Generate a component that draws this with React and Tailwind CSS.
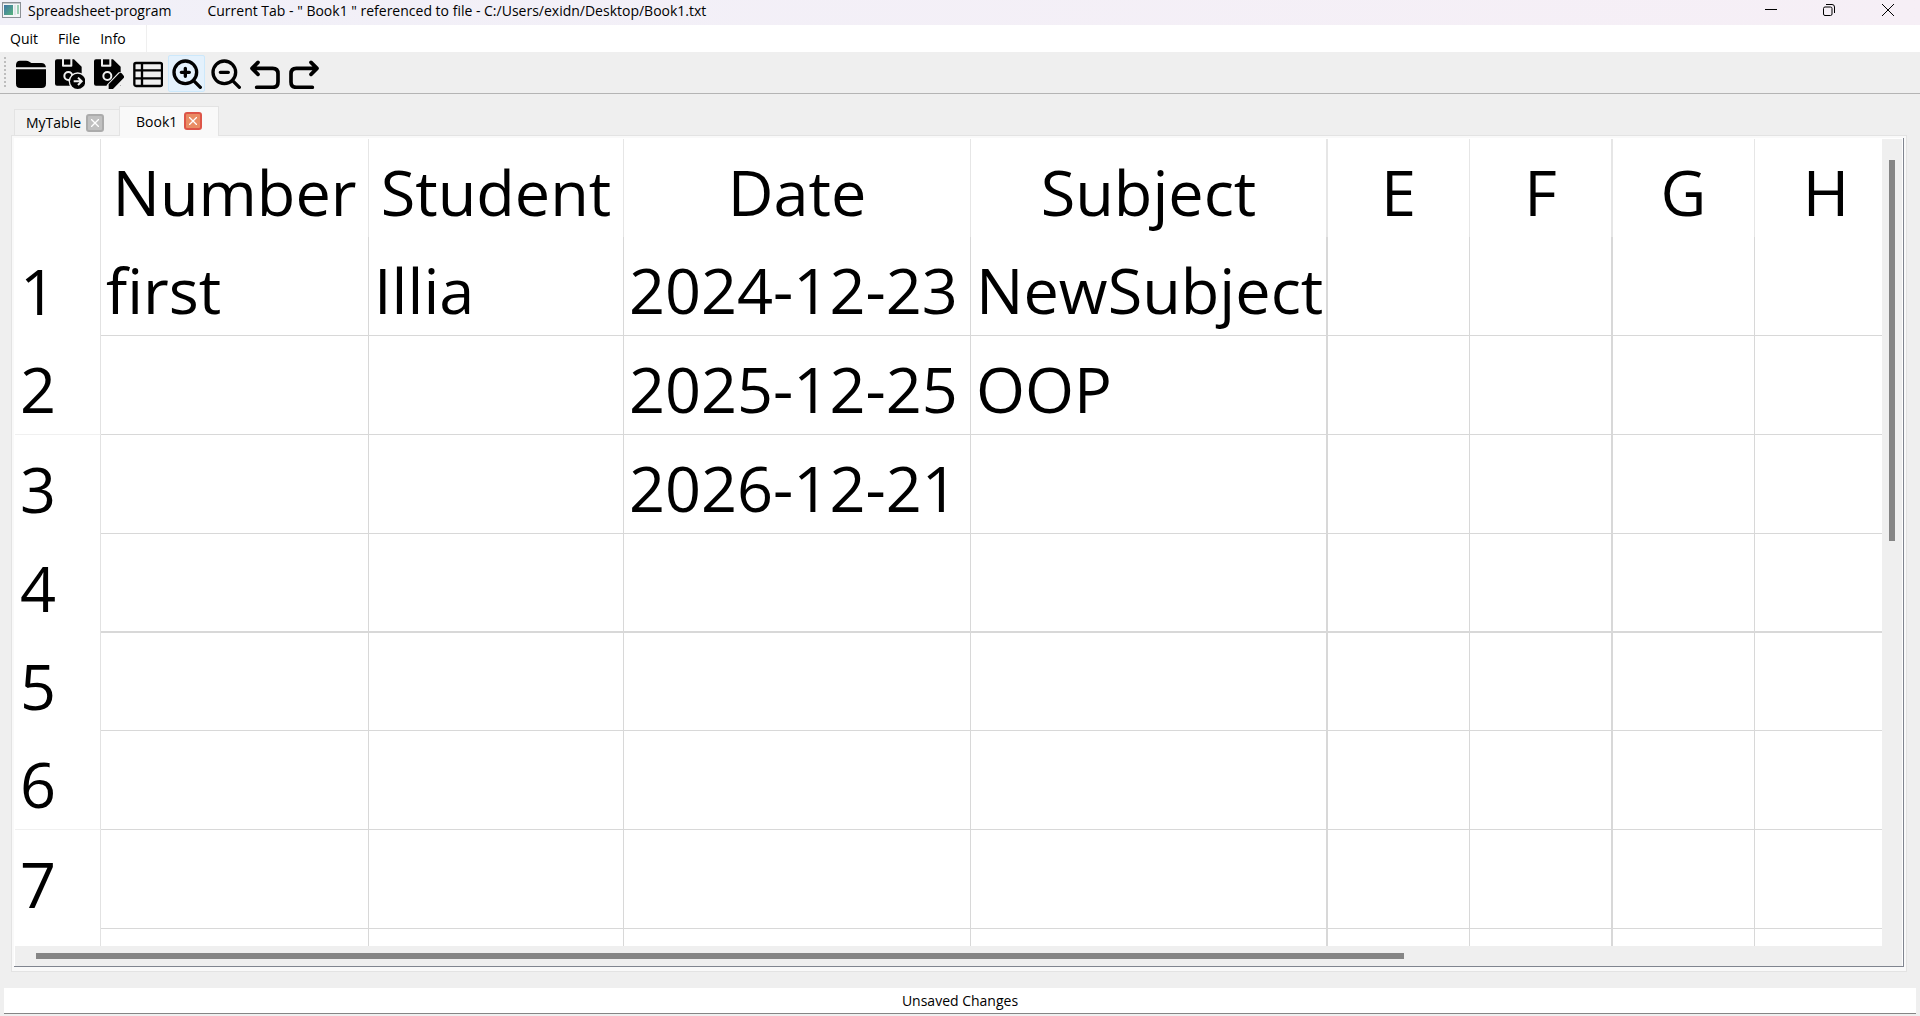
import React from "react";

const headers = ["Number", "Student", "Date", "Subject", "E", "F", "G", "H"];
const columns = [
  { width: "w-[268px]", edge: "border-r" },
  { width: "w-[255px]", edge: "border-r" },
  { width: "w-[347px]", edge: "border-r" },
  { width: "w-[357px]", edge: "border-r-2" },
  { width: "w-[142px]", edge: "border-r" },
  { width: "w-[143px]", edge: "border-r-2" },
  { width: "w-[142px]", edge: "border-r" },
  { width: "w-[143px]", edge: "border-r" },
];
const rows = [
  { label: "1", cells: ["first", "Illia", "2024-12-23", "NewSubject"], height: "h-[99px]", edge: "border-b" },
  { label: "2", cells: ["", "", "2025-12-25", "OOP"], height: "h-[99px]", edge: "border-b", ruled: true },
  { label: "3", cells: ["", "", "2026-12-21"], height: "h-[99px]", edge: "border-b" },
  { label: "4", cells: [], height: "h-[99px]", edge: "border-b-2" },
  { label: "5", cells: [], height: "h-[98px]", edge: "border-b" },
  { label: "6", cells: [], height: "h-[99px]", edge: "border-b", ruled: true },
  { label: "7", cells: [], height: "h-[99px]", edge: "border-b" },
  { label: "", cells: [], height: "h-[99px]", edge: "border-b" },
];

const Icon = ({ children }) => (
  <svg className="size-[30px]" viewBox="0 0 90 90" fill="none" stroke="#000" aria-hidden="true">
    {children}
  </svg>
);

const Disk = () => (
  <>
    <path d="M6 1H21V21Q21 23 24 23H49Q52 23 52 20V1H57L80 23V80H6Q0 80 0 74V7Q0 1 6 1Z" fill="#000" stroke="none" />
    <path d="M27 1H46V17H27Z" fill="#000" stroke="none" />
  </>
);

const tools = [
  {
    label: "Open",
    art: (
      <g fill="#000" stroke="none">
        <path d="M0 25V17Q1 5 12 5H30Q36 5 40 8L46 12H76Q88 12 90 25Z" />
        <path d="M0 31H90V74Q90 87 77 87H13Q0 87 0 74Z" />
      </g>
    ),
  },
  {
    label: "Save as new",
    art: (
      <>
        <Disk />
        <circle cx="40" cy="51" r="12" stroke="#efefef" strokeWidth="6" />
        <circle cx="68" cy="67" r="27" fill="#efefef" stroke="none" />
        <circle cx="68" cy="67" r="23" fill="#000" stroke="none" />
        <path d="M56 67H79M69 56L80 67L69 78" stroke="#efefef" strokeWidth="6" />
      </>
    ),
  },
  {
    label: "Save",
    art: (
      <>
        <Disk />
        <circle cx="40" cy="51" r="12" stroke="#efefef" strokeWidth="6" />
        <path d="M38 90V78L74 40H92V68L68 90Z" fill="#efefef" stroke="none" />
        <path d="M44 90V76L76 43Q80 40 83 43L89 50Q92 54 89 57L57 90Z" fill="#000" stroke="none" />
      </>
    ),
  },
  {
    label: "Table",
    art: (
      <g strokeWidth="7">
        <rect x="4" y="12" width="83" height="69" rx="5" />
        <path d="M4 34H87M4 58H87M27 12V81" />
      </g>
    ),
  },
  {
    label: "Zoom in",
    active: true,
    art: (
      <g strokeWidth="10">
        <circle cx="40" cy="40" r="34" />
        <path d="M64 64L85 85M28 40H52M40 28V52" strokeLinecap="round" />
      </g>
    ),
  },
  {
    label: "Zoom out",
    art: (
      <g strokeWidth="10">
        <circle cx="40" cy="40" r="34" />
        <path d="M64 64L85 85M28 40H52" strokeLinecap="round" />
      </g>
    ),
  },
  {
    label: "Undo",
    art: <path d="M24 10L6 28L24 46M6 28H68Q84 28 84 44V69Q84 85 68 85H20" strokeWidth="11" strokeLinecap="round" strokeLinejoin="round" />,
  },
  {
    label: "Redo",
    art: <path d="M66 10L84 28L66 46M84 28H22Q6 28 6 44V69Q6 85 22 85H70" strokeWidth="11" strokeLinecap="round" strokeLinejoin="round" />,
  },
];

function CloseTab({ name, active }) {
  return (
    <button
      aria-label={`Close ${name}`}
      className={
        active
          ? "flex size-[18px] items-center justify-center rounded-[3px] border-2 border-[#dd5548] bg-[#e98c64]"
          : "flex size-[18px] items-center justify-center rounded-[3px] border-2 border-[#ababab] bg-[#c0c0c0]"
      }
    >
      <svg className="size-2" viewBox="0 0 8 8" stroke="#fff" strokeWidth="1.3" aria-hidden="true">
        <path d="M0 0L8 8M8 0L0 8" />
      </svg>
    </button>
  );
}

function Sheet() {
  return (
    <table className="w-max table-fixed border-separate border-spacing-0 text-[63px] leading-[64px]">
      <thead>
        <tr className="h-[98px]">
          <td className="w-[86px] border-r border-[#e2e2e2] p-0" />
          {headers.map((h, i) => (
            <th key={h} scope="col" className={`${columns[i].width} ${columns[i].edge} border-[#e6e6e6] px-0 pt-2 pb-0 text-center font-normal whitespace-nowrap`}>
              {h}
            </th>
          ))}
        </tr>
      </thead>
      <tbody>
        {rows.map((row, r) => (
          <tr key={r} className={row.height}>
            <th scope="row" className={`border-r border-r-[#e2e2e2] pt-2 pr-0 pb-0 pl-[5px] text-left font-normal ${row.ruled ? "border-b border-b-[#f0f0f0]" : ""}`}>
              {row.label}
            </th>
            {columns.map((c, i) => (
              <td key={i} className={`${c.edge} ${row.edge} border-[#d8d8d8] pt-2 pr-0 pb-0 pl-[5px] whitespace-nowrap`}>
                {row.cells[i]}
              </td>
            ))}
          </tr>
        ))}
      </tbody>
    </table>
  );
}

export default function App() {
  return (
    <div className="flex h-screen flex-col overflow-hidden bg-[#efefef] font-['Open_Sans','Noto_Sans',sans-serif] text-sm text-black">
      <header className="flex h-[25px] shrink-0 items-start bg-linear-to-r from-[#f1f0f8] to-[#f6eff6]">
        <svg className="mt-0.5 ml-0.5 h-4 w-[19px]" viewBox="0 0 19 16" aria-hidden="true">
          <defs>
            <linearGradient id="pane" x1="0" y1="0" x2="1" y2="1">
              <stop offset="0" stopColor="#3f74a8" />
              <stop offset="1" stopColor="#58b47c" />
            </linearGradient>
          </defs>
          <rect x=".5" y=".5" width="18" height="15" fill="#f4f6f7" stroke="#8b9096" />
          <path d="M1 1.5H18" stroke="#c3c8cc" />
          <rect x="2" y="3" width="9" height="10" fill="url(#pane)" />
          <rect x="12" y="3" width="2" height="10" fill="#dfe5e8" />
          <rect x="15" y="3" width="2" height="9" fill="#9ccfb4" />
        </svg>
        <h1 className="ml-[7px] leading-[22px] whitespace-pre">Spreadsheet-program</h1>
        <p className="ml-9 leading-[22px] whitespace-pre">Current Tab - " Book1 " referenced to file - C:/Users/exidn/Desktop/Book1.txt</p>
        <div className="ml-auto flex h-5 items-center pr-0.5">
          <button aria-label="Minimize" className="flex w-[58px] justify-center">
            <svg className="size-3" viewBox="0 0 12 12" stroke="#000" aria-hidden="true"><path d="M0 5.5H12" /></svg>
          </button>
          <button aria-label="Restore" className="flex w-[58px] justify-center">
            <svg className="size-3" viewBox="0 0 12 12" fill="none" stroke="#000" aria-hidden="true">
              <rect x=".5" y="3" width="8.5" height="8.5" rx="1.5" />
              <path d="M3 .5H9Q11.5 .5 11.5 3V9" />
            </svg>
          </button>
          <button aria-label="Close" className="flex w-[60px] justify-center">
            <svg className="size-3" viewBox="0 0 12 12" stroke="#000" aria-hidden="true"><path d="M0 0L12 12M12 0L0 12" /></svg>
          </button>
        </div>
      </header>

      <nav className="flex h-[27px] shrink-0 bg-white">
        <div className="flex items-center gap-5 border-r border-[#efefef] pr-5 pl-2.5">
          <button>Quit</button>
          <button>File</button>
          <button>Info</button>
        </div>
      </nav>

      <div role="toolbar" aria-label="Main" className="flex h-[42px] shrink-0 items-start border-b border-[#b4b4b4] pt-[3px] pl-1">
        <span className="mt-0.5 mr-1.5 h-8 w-0.5 bg-[repeating-linear-gradient(#bdbdbd_0_2px,#efefef_2px_4px)]" />
        <div className="flex gap-0.5">
          {tools.map((t) => (
            <button
              key={t.label}
              aria-label={t.label}
              className={
                t.active
                  ? "flex h-[37px] w-[37px] items-center justify-center rounded-xs border border-[#cce8fb] bg-[#e4f1fc]"
                  : "flex h-[37px] w-[37px] items-center justify-center"
              }
            >
              <Icon>{t.art}</Icon>
            </button>
          ))}
        </div>
      </div>

      <main className="flex min-h-0 flex-1 flex-col pt-3 pr-[13px] pb-4 pl-[11px]">
        <div role="tablist" className="z-10 -mb-px flex h-[30px] shrink-0 items-end pl-[3px]">
          <div className="mb-px flex h-[26px] w-[105px] items-center justify-between border border-r-0 border-b-0 border-[#e3e3e3] bg-[#f2f2f2] pr-[15px] pl-[11px]">
            <button role="tab" aria-selected="false">MyTable</button>
            <CloseTab name="MyTable" />
          </div>
          <div className="flex h-[30px] w-[100px] items-start justify-between border border-b-0 border-[#e3e3e3] bg-[#f9f9f9] pt-[5px] pr-4 pl-4">
            <button role="tab" aria-selected="true" className="leading-[20px]">Book1</button>
            <CloseTab name="Book1" active />
          </div>
        </div>

        <section className="flex min-h-0 flex-1 border border-[#e3e3e3] bg-[#f9f9f9] pt-0.5 pr-0.5 pb-1 pl-0.5">
          <div className="grid min-h-0 min-w-0 flex-1 grid-cols-[minmax(0,1fr)_20px] grid-rows-[minmax(0,1fr)_20px] border-r border-b border-[#80858f] bg-white pt-px pr-px pl-px">
            <div className="overflow-hidden">
              <Sheet />
            </div>
            <div className="flex justify-center bg-[#efefef] pt-[21px]">
              <div className="h-[48.5%] w-1.5 bg-[#858585]" />
            </div>
            <div className="flex items-center bg-[#efefef] pl-[21px]">
              <div className="h-1.5 w-[74.1%] bg-[#858585]" />
            </div>
            <div className="bg-[#efefef]" />
          </div>
        </section>
      </main>

      <footer className="shrink-0 px-1 pb-0.5">
        <input
          readOnly
          aria-label="Status"
          value="Unsaved Changes"
          className="h-[26px] w-full border-b border-[#858585] bg-white text-center outline-none"
        />
      </footer>
    </div>
  );
}
